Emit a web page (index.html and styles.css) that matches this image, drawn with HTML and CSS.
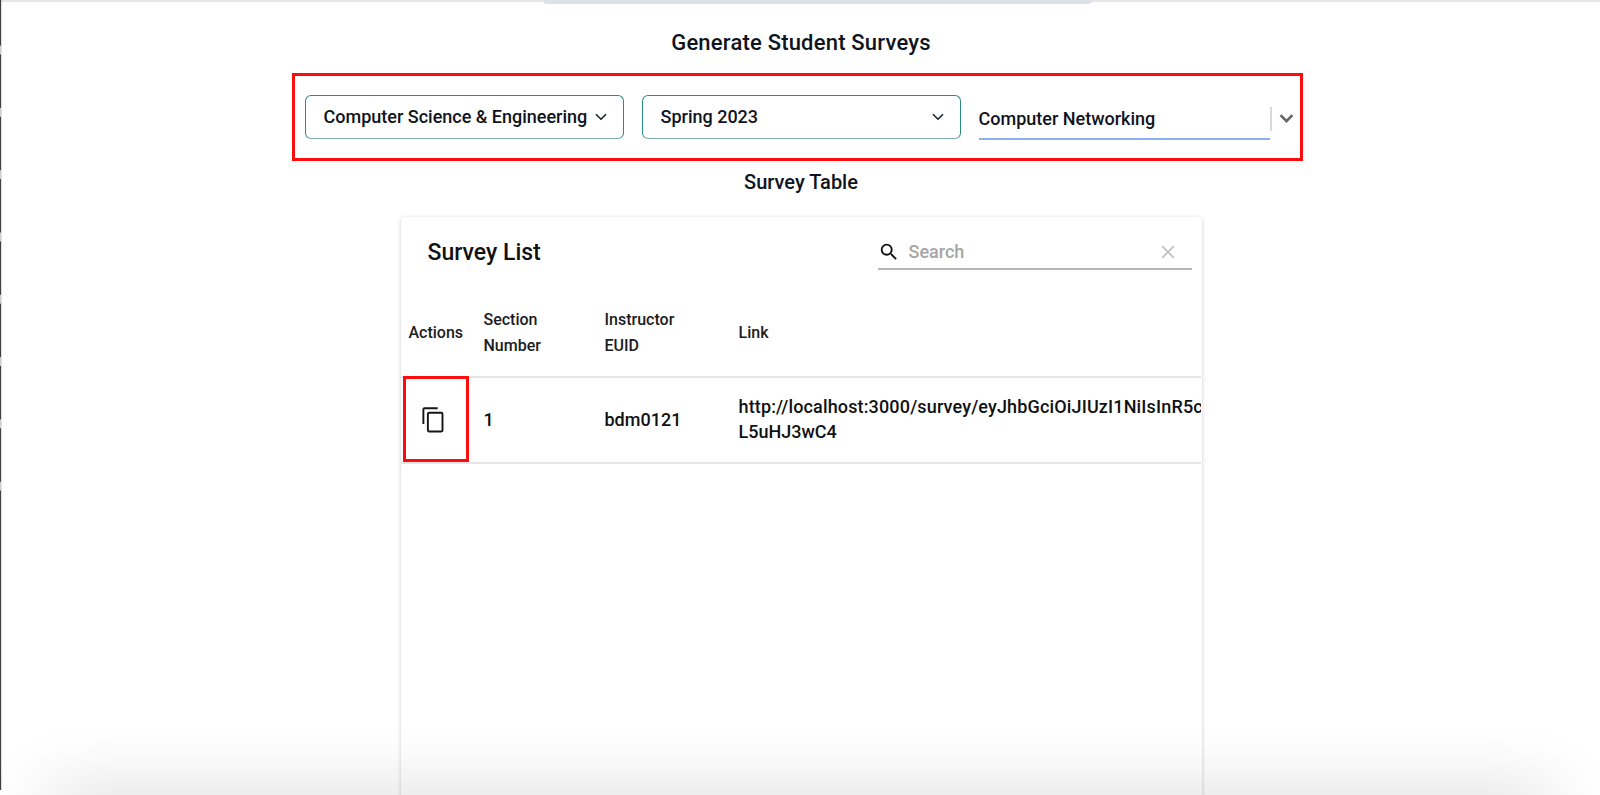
FILE: index.html
```html
<!DOCTYPE html>
<html lang="en">
<head>
<meta charset="utf-8">
<title>Generate Student Surveys</title>
<link rel="stylesheet" href="styles.css">
</head>
<body>
<div class="window">
  <div class="topbar"><div class="topbar-tab"></div></div>
  <main class="page">
    <h1 class="title">Generate Student Surveys</h1>
    <section class="filters">
      <div class="select">
        <span class="select-text">Computer Science &amp; Engineering</span>
        <svg class="chevron" viewBox="0 0 12 8"><path d="M1 1.2 6 6.2 11 1.2"/></svg>
      </div>
      <div class="select">
        <span class="select-text">Spring 2023</span>
        <svg class="chevron" viewBox="0 0 12 8"><path d="M1 1.2 6 6.2 11 1.2"/></svg>
      </div>
      <div class="combo">
        <div class="combo-input">Computer Networking</div>
        <div class="combo-sep"></div>
        <svg class="combo-chevron" viewBox="0 0 20 20"><path d="M4.500 7.200 6 5.800 10 9.800 14 5.800 15.500 7.200 10 12.800z"/></svg>
      </div>
    </section>
    <h2 class="subtitle">Survey Table</h2>
    <section class="card">
      <div class="toolbar">
        <h3 class="card-title">Survey List</h3>
        <div class="search">
          <svg class="search-icon" viewBox="0 0 24 24"><path d="M15.500 14h-.79l-.28-.27A6.470 6.470 0 0 0 16 9.500 6.500 6.500 0 1 0 9.500 16c1.610 0 3.090-.59 4.230-1.570l.27.28v.79l5 4.990L20.490 19l-4.990-5zm-6 0C7.010 14 5 11.990 5 9.500S7.010 5 9.500 5 14 7.010 14 9.500 11.990 14 9.500 14z"/></svg>
          <span class="search-text">Search</span>
          <svg class="clear-icon" viewBox="0 0 24 24"><path d="M19 6.410 17.590 5 12 10.590 6.410 5 5 6.410 10.590 12 5 17.590 6.410 19 12 13.410 17.590 19 19 17.590 13.410 12z"/></svg>
        </div>
      </div>
      <div class="table">
        <div class="row head">
          <div class="cell c-actions">Actions</div>
          <div class="cell c-section">Section Number</div>
          <div class="cell c-euid">Instructor EUID</div>
          <div class="cell c-link">Link</div>
        </div>
        <div class="row body">
          <div class="highlight"></div>
          <div class="cell c-actions">
            <svg class="copy-icon" viewBox="0 0 24 24"><path d="M15.700 2H4a1 1 0 0 0-1 1v13"/><rect x="7" y="6" width="13" height="16.600" rx="1"/></svg>
          </div>
          <div class="cell c-section">1</div>
          <div class="cell c-euid">bdm0121</div>
          <div class="cell c-link"><span class="link-line link-long">http://localhost:3000/survey/eyJhbGciOiJIUzI1NiIsInR5c</span><span class="link-line">L5uHJ3wC4</span></div>
        </div>
      </div>
    </section>
  </main>
  <div class="bottom-shade"></div>
</div>
</body>
</html>
```
FILE: styles.css
```css
* { box-sizing: border-box; }
html, body { margin: 0; height: 100%; overflow: hidden; background: #fff; }
body { font-family: Roboto, "Liberation Sans", sans-serif; color: #0f1420; }
.window { position: relative; width: 1600px; height: 795px; overflow: hidden; background: #fff; }
.window::before {
  content: ""; position: absolute; left: 0; top: 0; height: 491px; width: 1px; z-index: 3;
  background: linear-gradient(to bottom, #3f3f3f 0 53.5px, #d0d0d0 53.5px 62.3px) 0 54.5px / 100% 62.3px repeat-y;
  box-shadow: 1px 0 0 rgba(0,0,0,.12);
}
.window::after {
  content: ""; position: absolute; left: 0; top: 491px; height: 299px; width: 1px; z-index: 3;
  background: #3f3f3f;
  box-shadow: 1px 0 0 rgba(0,0,0,.12);
}
.topbar { height: 2px; background: #e6e6e6; display: flex; justify-content: center; }
.topbar-tab { width: 549px; height: 4px; margin-left: 34px; background: #dde1e8; border-radius: 0 0 6px 6px; flex: none; }
.page { display: flex; flex-direction: column; align-items: center; }
.title { margin: 29px 0 0 2px; height: 24px; line-height: 24px; font-size: 22px; font-weight: 500; letter-spacing: .2px; white-space: nowrap; }
.filters {
  margin: 18px 0 0 -6px; width: 1011px; height: 88px; border: 3px solid #fb0d0d;
  display: flex; align-items: flex-start; padding: 19px 0 0 10px;
}
.select {
  width: 319px; height: 44px; flex: none; margin-right: 18px; padding: 0 16px 0 18px;
  border: 1px solid #2a8a85; border-bottom-color: #7fabab; border-radius: 6px;
  display: flex; align-items: center; justify-content: space-between;
  font-size: 18px; font-weight: 500; white-space: nowrap;
}
.select-text { margin-bottom: 2px; }
.chevron { width: 12px; height: 8px; fill: none; stroke: #15202b; stroke-width: 1.6; flex: none; }
.combo { display: flex; align-items: flex-start; flex: none; }
.combo-input {
  width: 291px; height: 45px; border-bottom: 2px solid #8caef5; font-size: 18px; font-weight: 500;
  line-height: 47px; white-space: nowrap;
}
.combo-sep { width: 2px; height: 24px; margin-top: 12px; background: #d9d9d9; flex: none; }
.combo-chevron { width: 25px; height: 25px; margin: 12px 0 0 2px; fill: #666; flex: none; }
.subtitle { margin: 10px 0 0 2px; height: 22px; line-height: 22px; font-size: 20px; font-weight: 500; white-space: nowrap; }
.card {
  margin: 24px 0 0 2px; width: 801px; height: 640px; flex: none; background: #fff; border-radius: 4px;
  box-shadow: 0 1px 4px rgba(0,0,0,.2);
}
.toolbar { height: 72px; display: flex; align-items: flex-start; justify-content: space-between; padding: 21px 10px 0 27px; }
.card-title { margin: 1px 0 0; font-size: 23px; font-weight: 500; line-height: 28px; color: #111; white-space: nowrap; }
.search { width: 314px; height: 32px; padding-bottom: 3px; border-bottom: 2px solid #b5b5b5; display: flex; align-items: center; }
.search-icon { width: 22px; height: 22px; fill: #111; flex: none; }
.search-text { margin-left: 9px; font-size: 18px; font-weight: 500; color: #a6a6a6; flex: 1; }
.clear-icon { width: 22px; height: 22px; fill: #c4c4c4; margin-right: 13px; flex: none; }
.table { width: 800px; overflow: hidden; }
.row { display: flex; border-bottom: 2px solid #e6e6e6; position: relative; }
.row.head { height: 89px; align-items: center; font-size: 16px; font-weight: 500; line-height: 26px; color: #1c1c1c; }
.row.body { height: 86px; padding-bottom: 2px; align-items: center; font-size: 18px; font-weight: 500; color: #111; }
.cell { flex: none; }
.c-actions { width: 83px; padding-left: 8px; }
.c-section { width: 121px; padding-right: 40px; }
.c-euid { width: 134px; padding-right: 40px; }
.c-link { width: 462px; white-space: nowrap; overflow: hidden; line-height: 25px; }
.link-line { display: block; }
.link-long { letter-spacing: .15px; }
.copy-icon { width: 27px; height: 27px; fill: none; stroke: #151515; stroke-width: 1.7; display: block; margin-left: 11px; }
.highlight { position: absolute; left: 2px; top: -2px; width: 66px; height: 86px; border: 3px solid #fb0d0d; }
.bottom-shade {
  position: absolute; left: 48px; right: 48px; top: 795px; height: 40px; z-index: 2;
  box-shadow: 0 0 70px rgba(0,0,0,.18);
}
```
